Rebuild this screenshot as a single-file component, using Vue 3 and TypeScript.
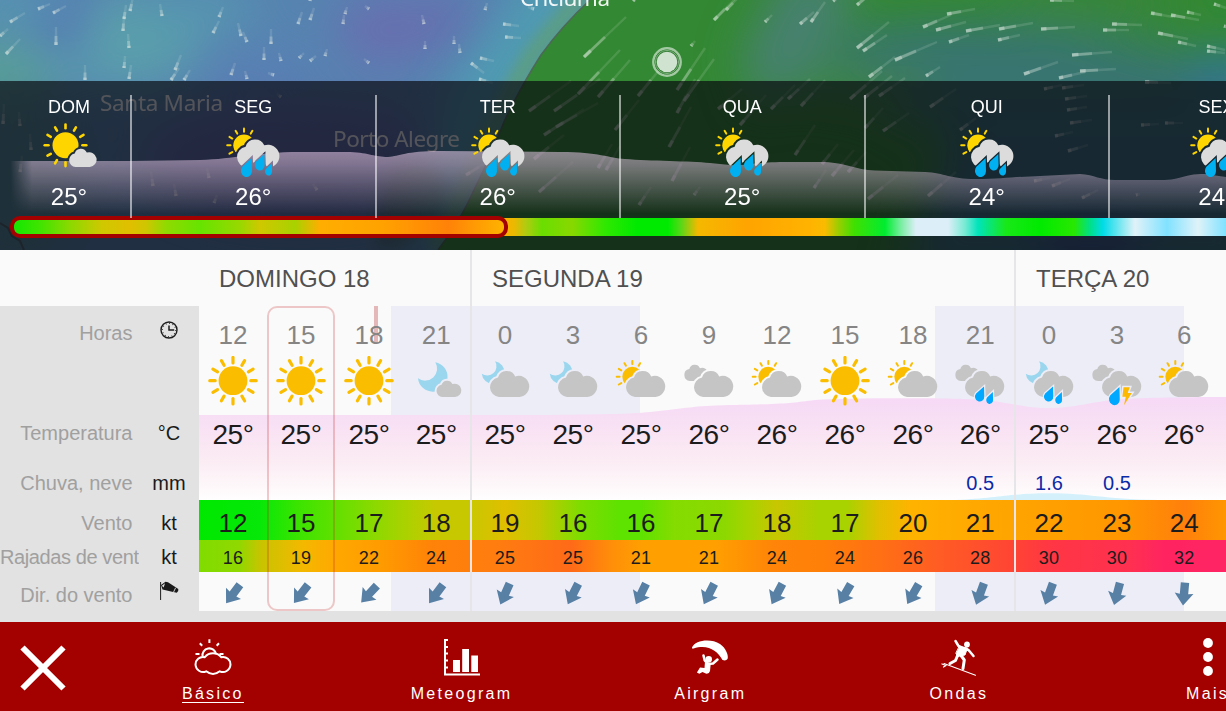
<script setup lang="ts">
type Icon = 'sun' | 'moonSmall' | 'moon' | 'sunCloud' | 'clouds' | 'cloudsRain' | 'moonRain' | 'storm'

interface Hour {
  hour: number
  icon: Icon
  temp: number
  rain?: string
  wind: number
  gust: number
  dir: number
}

interface Day {
  title: string
  hours: Hour[]
}

const overview = [
  { name: 'DOM', temp: '25°', rainy: false },
  { name: 'SEG', temp: '26°', rainy: true },
  { name: 'TER', temp: '26°', rainy: true },
  { name: 'QUA', temp: '25°', rainy: true },
  { name: 'QUI', temp: '24°', rainy: true },
  { name: 'SEX', temp: '24°', rainy: true },
]

const days: Day[] = [
  {
    title: 'DOMINGO 18',
    hours: [
      { hour: 12, icon: 'sun', temp: 25, wind: 12, gust: 16, dir: 37 },
      { hour: 15, icon: 'sun', temp: 25, wind: 15, gust: 19, dir: 38 },
      { hour: 18, icon: 'sun', temp: 25, wind: 17, gust: 22, dir: 43 },
      { hour: 21, icon: 'moonSmall', temp: 25, wind: 18, gust: 24, dir: 37 },
    ],
  },
  {
    title: 'SEGUNDA 19',
    hours: [
      { hour: 0, icon: 'moon', temp: 25, wind: 19, gust: 25, dir: 24 },
      { hour: 3, icon: 'moon', temp: 25, wind: 16, gust: 25, dir: 27 },
      { hour: 6, icon: 'sunCloud', temp: 25, wind: 16, gust: 21, dir: 26 },
      { hour: 9, icon: 'clouds', temp: 26, wind: 17, gust: 21, dir: 27 },
      { hour: 12, icon: 'sunCloud', temp: 26, wind: 18, gust: 24, dir: 28 },
      { hour: 15, icon: 'sun', temp: 26, wind: 17, gust: 24, dir: 30 },
      { hour: 18, icon: 'sunCloud', temp: 26, wind: 20, gust: 26, dir: 30 },
      { hour: 21, icon: 'cloudsRain', temp: 26, rain: '0.5', wind: 21, gust: 28, dir: 20 },
    ],
  },
  {
    title: 'TERÇA 20',
    hours: [
      { hour: 0, icon: 'moonRain', temp: 25, rain: '1.6', wind: 22, gust: 30, dir: 20 },
      { hour: 3, icon: 'storm', temp: 26, rain: '0.5', wind: 23, gust: 30, dir: 15 },
      { hour: 6, icon: 'sunCloud', temp: 26, wind: 24, gust: 32, dir: 5 },
    ],
  },
]

const hours = days.flatMap((d) => d.hours)

const allRays = [0, 30, 60, 90, 120, 150, 180, 210, 240, 270, 300, 330]
const backRays = [240, 270, 300, 330, 0, 30]

const cloud =
  'M19.3 41A9.8 9.8 0 0 1 18.2 21.6A9.2 9.2 0 0 1 35.4 20.4A10.6 10.6 0 1 1 39.6 41Z'
const drop = 'M9.5 0L9.8 9.7A4.9 4.9 0 1 1 1.2 6.8Z'
const moon = 'M24.3 6.3A14.8 14.8 0 1 1 7 22.3A12 12 0 0 0 24.3 6.3Z'

const hasSunBack = (i: Icon) => i === 'sunCloud'
const hasMoonBack = (i: Icon) => i === 'moon' || i === 'moonRain'
const hasCloudBack = (i: Icon) => i === 'clouds' || i === 'cloudsRain' || i === 'storm'

function cloudMask(i: Icon) {
  if (i === 'cloudsRain' || i === 'moonRain') return 'url(#cut-rain)'
  if (i === 'storm') return 'url(#cut-storm)'
  return undefined
}

// wind particles: head x, head y, tail dx, tail dy
const streaks = [
  [10, 22, 15, -9], [38, 9, 12, -5], [53, 13, 13, -7], [6, 54, 14, -15], [0, 36, 8, -7],
  [56, 45, 0, -18], [123, 31, 1, -15], [124, 19, 2, -14], [130, 11, 3, -14], [129, 48, -1, -14],
  [124, 68, 1, -12], [129, 79, 2, -14], [162, 16, -2, -12], [175, 70, 6, -15], [171, 80, 8, -12],
  [184, 80, 6, -10], [85, 80, 0, -15], [213, 33, 6, -12], [219, 17, 4, -10], [241, 36, -3, -13],
  [247, 42, -4, -10], [271, 44, 0, -15], [264, 60, 0, -13], [231, 75, 4, -12], [247, 79, -2, -8],
  [281, 61, -2, -8], [299, 58, 5, -5], [310, 61, 6, -5], [325, 56, 2, -7], [298, 24, 4, -12],
  [310, 20, 4, -12], [343, 24, 1, -9], [345, 14, 2, -7], [369, 9, -4, -3], [369, 63, -5, -4],
  [310, 1, 1, -5], [274, 75, -6, -2], [534, 9, -6, -2], [485, 10, 2, -7], [424, 24, -2, -9],
  [425, 49, 0, -8], [460, 53, -1, -9], [454, 44, 0, -8], [503, 24, 16, 2], [505, 37, 16, 1],
  [480, 58, 14, 3], [471, 63, 13, 10], [479, 79, 14, 4],
  [584, 57, 42, -40], [633, 1, 8, -8], [714, 20, 22, -22], [726, 10, 14, -14], [765, 22, 7, -7],
  [800, 24, 14, -12], [691, 46, 4, -5], [578, 94, 42, -44], [598, 97, 32, -37], [638, 96, 26, -32],
  [677, 90, 28, -42], [684, 101, 30, -42], [677, 113, 18, -34], [529, 111, 42, -30],
  [554, 111, 46, -32], [556, 127, 42, -24], [544, 135, 40, -26], [615, 130, 24, -30],
  [669, 147, 22, -40], [718, 109, 24, -20], [740, 125, 26, -30], [771, 109, 24, -24],
  [788, 99, 22, -20], [801, 106, 24, -26], [534, 159, 30, -24], [539, 192, 34, -30],
  [598, 168, 14, -24], [606, 170, 14, -24], [672, 181, 18, -34], [639, 205, 12, -18],
  [694, 195, 6, -8], [466, 175, 26, -16], [795, 155, 20, -30], [814, 188, 12, -18],
  [857, 5, 14, -12], [833, 1, 8, -6], [811, 22, 14, -20], [857, 48, 32, -26], [863, 51, 24, -16],
  [895, 60, 42, -18], [869, 77, 26, -20], [926, 76, 14, -9], [923, 27, 28, -12],
  [936, 30, 30, -8], [947, 14, 28, -5], [966, 31, 34, -6], [949, 42, 20, -7], [999, 29, 34, -6],
  [998, 40, 22, -5], [1041, 29, 34, -2], [1103, 30, 26, 0], [1112, 24, 30, 1], [1072, 55, 40, -3],
  [1080, 71, 36, -2], [1024, 74, 34, -12], [1059, 78, 26, -6], [1151, 13, 22, 4], [1171, 15, 28, 5],
  [1187, 12, 14, 3], [1158, 33, 30, 6], [1178, 42, 18, 4], [1207, 46, 18, 4], [1207, 51, 18, 2],
  [1214, 4, 12, 4], [1224, 26, 6, 2], [1050, 0, 24, 1], [850, 99, 32, -28], [864, 98, 28, -22],
  [879, 96, 26, -18], [930, 107, 26, -18], [883, 131, 26, -18], [865, 128, 18, -20],
  [1044, 89, 18, -4], [1062, 88, 22, -3], [1065, 99, 22, -3], [1067, 110, 20, -3],
  [1070, 123, 22, -3], [1055, 136, 18, -4], [1068, 151, 20, -6], [1145, 82, 26, 1],
  [1141, 125, 18, -1], [1165, 123, 18, 0], [960, 130, 16, -12], [822, 164, 16, -20],
  [832, 176, 22, -26], [848, 172, 18, -20], [868, 199, 30, -24], [928, 196, 28, -24],
  [1034, 181, 16, -3], [1052, 186, 18, -7], [1082, 198, 16, -8], [1136, 195, 4, -1],
  [20, 172, 2, -16], [31, 150, -1, -16], [3, 124, 1, -20], [20, 126, -1, -14], [153, 186, -2, -14],
  [176, 196, -2, -12], [209, 178, -2, -10], [214, 203, 3, -8], [281, 97, -4, -3], [317, 190, -4, -6],
]

const nav = [
  { id: 'basic', label: 'Básico' },
  { id: 'meteogram', label: 'Meteogram' },
  { id: 'airgram', label: 'Airgram' },
  { id: 'waves', label: 'Ondas' },
  { id: 'more', label: 'Mais' },
]
</script>

<template>
  <div class="app">
    <section class="top">
      <svg class="map" width="1226" height="250" viewBox="0 0 1226 250">
        <defs>
          <filter id="soft" x="-50%" y="-50%" width="200%" height="200%">
            <feGaussianBlur stdDeviation="22" />
          </filter>
          <filter id="edge" x="-10%" y="-10%" width="120%" height="120%">
            <feGaussianBlur stdDeviation="7" />
          </filter>
          <filter id="trail" x="-5%" y="-5%" width="110%" height="110%">
            <feGaussianBlur stdDeviation=".6" />
          </filter>
          <clipPath id="sea">
            <path d="M590 0Q562 26 541 55Q520 88 504 122Q489 160 474 190Q460 222 438 250H1226V0Z" />
          </clipPath>
        </defs>
        <rect width="1226" height="250" fill="#5683b0" />
        <g filter="url(#soft)">
          <ellipse cx="5" cy="70" rx="70" ry="30" fill="#58a098" />
          <ellipse cx="100" cy="72" rx="70" ry="18" fill="#5898ae" />
          <ellipse cx="55" cy="28" rx="34" ry="20" fill="#5474b5" />
          <ellipse cx="145" cy="35" rx="60" ry="45" fill="#5a9fab" />
          <ellipse cx="10" cy="5" rx="50" ry="16" fill="#569cb0" />
          <ellipse cx="200" cy="10" rx="60" ry="24" fill="#5795b0" />
          <ellipse cx="250" cy="70" rx="60" ry="26" fill="#5880b4" />
          <ellipse cx="390" cy="30" rx="55" ry="36" fill="#6870b0" />
          <ellipse cx="440" cy="20" rx="40" ry="30" fill="#6571b0" />
          <ellipse cx="300" cy="160" rx="160" ry="60" fill="#5d6cac" />
          <ellipse cx="20" cy="180" rx="60" ry="90" fill="#4f8594" />
        </g>
        <path
          d="M580 -30L556 -10Q535 26 512 55Q487 88 472 122L440 250" fill="none" stroke="#4f9cb2"
          stroke-width="62" filter="url(#soft)"
        />
        <path
          d="M588 -10Q555 26 532 55Q512 88 496 122L436 250" fill="none" stroke="#5c9f80"
          stroke-width="16" filter="url(#edge)"
        />
        <g clip-path="url(#sea)">
          <rect x="420" width="806" height="250" fill="#338833" />
          <g filter="url(#soft)">
            <path d="M790 -40L860 -20L820 70L760 110L740 60Z" fill="#46816f" />
            <path d="M830 40Q950 -10 1260 70V130H900Z" fill="#37756f" />
            <ellipse cx="870" cy="85" rx="70" ry="18" fill="#3d8050" />
            <ellipse cx="1090" cy="0" rx="90" ry="26" fill="#38853b" />
            <path d="M960 110H1260V280H900Z" fill="#376e80" />
            <ellipse cx="1090" cy="250" rx="60" ry="25" fill="#384e90" />
            <ellipse cx="1226" cy="72" rx="40" ry="24" fill="#337590" />
          </g>
        </g>
        <path
          d="M590 0Q562 26 541 55Q520 88 504 122Q489 160 474 190Q460 222 438 250" fill="none"
          stroke="#4c6a55" stroke-width="1.6"
        />
        <path d="M0 223L8 228L12 236L20 241L24 250" fill="none" stroke="#444" stroke-width="2" opacity=".6" />
        <path
          d="M385 178L400 162L420 160L432 165L448 188L442 215L420 236L400 250H374L378 210Z"
          fill="#446655" opacity=".45" filter="url(#edge)"
        />
        <g stroke="#e8efe8" filter="url(#trail)">
          <g v-for="(s, i) in streaks" :key="i">
            <path
              :d="`M${s[0]} ${s[1]}l${s[2]} ${s[3]}`" stroke-width="2.4" opacity=".14"
            />
            <path
              :d="`M${s[0]} ${s[1]}l${s[2] * 0.5} ${s[3] * 0.5}`" stroke-width="3" opacity=".28"
            />
            <path
              :d="`M${s[0]} ${s[1]}l${s[2] * 0.16} ${s[3] * 0.16}`" stroke-width="3.6" opacity=".4"
            />
          </g>
        </g>
        <g class="places">
          <text x="520" y="6" textLength="90">Criciúma</text>
          <text x="100" y="110.500" textLength="123">Santa Maria</text>
          <text x="333" y="147" textLength="127">Porto Alegre</text>
        </g>
        <circle cx="667" cy="62" r="13.700" fill="none" stroke="#fff" stroke-width="2.400" opacity=".55" />
        <circle cx="667" cy="62" r="12.300" fill="#2f7a2f" />
        <circle cx="667" cy="62" r="11.600" fill="none" stroke="#8fbf8f" stroke-width=".8" />
        <circle cx="667" cy="62" r="10.300" fill="#d0e3d0" />
      </svg>

      <div class="overview">
        <svg class="overview-temp" width="1226" height="169" viewBox="0 81 1226 169">
          <defs>
            <linearGradient id="ovFade" x1="0" y1="150" x2="0" y2="214" gradientUnits="userSpaceOnUse">
              <stop offset="0" stop-color="#f3d3f3" stop-opacity=".54" />
              <stop offset=".2" stop-color="#f3d3f3" stop-opacity=".46" />
              <stop offset="1" stop-color="#f3d3f3" stop-opacity="0" />
            </linearGradient>
            <linearGradient id="ovLeft" x1="10" y1="0" x2="32" y2="0" gradientUnits="userSpaceOnUse">
              <stop offset="0" stop-color="#000" />
              <stop offset="1" stop-color="#fff" />
            </linearGradient>
            <mask id="ovMask" maskUnits="userSpaceOnUse" x="0" y="81" width="1226" height="169">
              <rect x="0" y="81" width="1226" height="169" fill="url(#ovLeft)" />
            </mask>
          </defs>
          <path
            mask="url(#ovMask)" fill="url(#ovFade)"
            d="M0 161H130L200 160C235 159 255 152 300 152H350C370 153 375 157 388 157C400 156 405 151 440 151L560 152C600 152 608 158 625 159C650 161 690 161 710 163L735 165.500C755 164 760 162 790 162H820C845 162 855 170 875 170.500L925 172C945 173 950 179 975 179C1000 179 1010 177 1030 176.500L1080 174C1095 175 1100 180 1115 180H1160C1185 180 1180 174 1205 174L1226 177V215H0Z"
          />
        </svg>
        <div class="wind-strip"></div>
        <div class="viewport"></div>
        <div class="overview-days">
          <div v-for="(d, i) in overview" :key="i" class="ov-day">
            <div class="ov-name">{{ d.name }}</div>
            <svg v-if="!d.rainy" class="ov-icon" width="56" height="56" viewBox="0 0 56 56">
              <g mask="url(#cut-ov-small)">
                <circle cx="24.500" cy="22.300" r="13" fill="#ffd500" />
                <path
                  v-for="a in allRays" :key="a" d="M0 -17V-20.800" class="ray ov-ray thick"
                  :transform="`translate(24.5 22.3) rotate(${a})`"
                />
              </g>
              <path :d="cloud" fill="#dcdcdc" transform="translate(21 15.3) scale(.7)" />
            </svg>
            <svg v-else class="ov-icon" width="56" height="56" viewBox="0 0 56 56">
              <g mask="url(#cut-ov-cloud)">
                <circle cx="19" cy="22.300" r="10.700" fill="#ffd500" />
                <path
                  v-for="a in backRays" :key="a" d="M0 -13.500V-16.800" class="ray ov-ray"
                  :transform="`translate(19 22.3) rotate(${a})`"
                />
              </g>
              <g mask="url(#cut-ov-rain)">
                <path :d="cloud" fill="#dcdcdc" transform="translate(1 0.3) scale(1.08)" />
              </g>
              <g fill="#00b0f0">
                <path :d="drop" transform="translate(16 35) scale(1.12 1.28)" />
                <path :d="drop" transform="translate(30 31) scale(.98 1.11)" />
                <path :d="drop" transform="translate(40 40.3) scale(.72 .82)" />
              </g>
            </svg>
            <div class="ov-temp">{{ d.temp }}</div>
          </div>
        </div>
      </div>
    </section>

    <section class="forecast">
      <div class="labels">
        <div class="label hours"><span>Horas</span>
          <i><svg width="18" height="18" viewBox="0 0 18 18" fill="none" stroke="#1d1d1d">
            <circle cx="9" cy="9" r="8" stroke-width="1.400" />
            <circle cx="9" cy="9" r="6.700" stroke-width="1.300" stroke-dasharray=".8 2.708" />
            <path d="M9 4.500V9H14.200" stroke-width="1.500" />
          </svg></i>
        </div>
        <div class="label icons"></div>
        <div class="label temp"><span>Temperatura</span><i>°C</i></div>
        <div class="label rain"><span>Chuva, neve</span><i>mm</i></div>
        <div class="label wind"><span>Vento</span><i>kt</i></div>
        <div class="label gust"><span>Rajadas de vento</span><i>kt</i></div>
        <div class="label dir"><span>Dir. do vento</span>
          <i><svg width="20" height="20" viewBox="0 0 20 20">
            <path d="M1.600 1V19" stroke="#1d1d1d" stroke-width="1" />
            <path d="M2 4L6.500 .8L9 1.200L19.300 8Q19.800 10.200 17.800 11.800L12 10.500L3.500 8.500Z" fill="#1a1a1a" />
            <path d="M2.900 4.800L6 2.300L4.700 6.500Z" fill="#e2e2e2" />
            <path d="M16.600 6.800L14.600 11" stroke="#e2e2e2" stroke-width=".9" />
          </svg></i>
        </div>
      </div>

      <div class="table">
        <div class="titles">
          <div
            v-for="d in days" :key="d.title" class="title"
            :style="{ width: d.hours.length * 68 + 'px' }"
          >{{ d.title }}</div>
        </div>
        <div class="grid">
          <div class="night first"></div>
          <div class="night second"></div>
          <div class="now"></div>
          <svg class="chart" width="1027" height="194" viewBox="199 306 1027 194">
            <defs>
              <linearGradient id="pink" x1="0" y1="397" x2="0" y2="500" gradientUnits="userSpaceOnUse">
                <stop offset="0" stop-color="#f6d9f6" />
                <stop offset=".25" stop-color="#f8e0f4" />
                <stop offset=".6" stop-color="#fbebf3" />
                <stop offset="1" stop-color="#fffefe" />
              </linearGradient>
            </defs>
            <path
              fill="url(#pink)"
              d="M199 415H540C600 414.500 630 414 650 412C690 408 690 406 730 405C790 404 790 403 815 400C840 398.500 880 398 920 398.300C960 398.500 985 399 1005 403C1025 406 1030 408 1049 408C1075 408 1090 402 1117 399.500C1135 398 1180 397 1226 397V500H199Z"
            />
            <path
              fill="#d4f1fb"
              d="M955 500C1000 498 1010 493.300 1050 493.300C1090 493.300 1100 499 1160 500Z"
            />
          </svg>

          <div class="row hours">
            <div v-for="(h, i) in hours" :key="i" class="cell">{{ h.hour }}</div>
          </div>
          <div class="row icons">
            <div v-for="(h, i) in hours" :key="i" class="cell">
              <svg width="52" height="52" viewBox="0 0 52 52">
                <template v-if="h.icon === 'sun'">
                  <circle cx="26" cy="24.700" r="14.400" fill="#fbbd00" />
                  <path
                    v-for="a in allRays" :key="a" d="M0 -17.800V-23.200" class="ray thick"
                    :transform="`translate(26 24.7) rotate(${a})`"
                  />
                </template>
                <template v-else-if="h.icon === 'moonSmall'">
                  <g mask="url(#cut-small)"><path :d="moon" fill="#9ad6ee" transform="translate(1 0)" /></g>
                  <path :d="cloud" fill="#c5c5c5" transform="translate(20.1 15.2) scale(.63)" />
                </template>
                <g v-else transform="translate(.8 0)">
                  <g mask="url(#cut-cloud)">
                    <template v-if="hasSunBack(h.icon)">
                      <circle cx="16.500" cy="20.700" r="10" fill="#fbbd00" />
                      <path
                        v-for="a in backRays" :key="a" d="M0 -12.700V-15.600" class="ray"
                        :transform="`translate(16.5 20.7) rotate(${a})`"
                      />
                    </template>
                    <path
                      v-if="hasMoonBack(h.icon)" :d="moon" fill="#9ad6ee"
                      transform="translate(-3.4 .5) scale(.77)"
                    />
                    <path
                      v-if="hasCloudBack(h.icon)" :d="cloud" fill="#c5c5c5"
                      transform="translate(-5.8 -.5) scale(.62)"
                    />
                  </g>
                  <g :mask="cloudMask(h.icon)"><path :d="cloud" fill="#c5c5c5" /></g>
                  <g v-if="h.icon === 'cloudsRain' || h.icon === 'moonRain'" fill="#00a8ff">
                    <path :d="drop" transform="translate(20.2 30.6) scale(.95 1)" />
                    <path :d="drop" transform="translate(31.4 36) scale(.7 .8)" />
                  </g>
                  <template v-if="h.icon === 'storm'">
                    <path :d="drop" fill="#00a8ff" transform="translate(17.2 31) scale(1.1 1.22)" />
                    <path d="M31.700 31.300H38L35.900 37H40L32.200 49.300L34 40.800H30.600Z" fill="#fcb900" />
                  </template>
                </g>
              </svg>
            </div>
          </div>
          <div class="row temp">
            <div v-for="(h, i) in hours" :key="i" class="cell">{{ h.temp }}°</div>
          </div>
          <div class="row rain">
            <div v-for="(h, i) in hours" :key="i" class="cell">{{ h.rain }}</div>
          </div>
          <div class="row wind">
            <div v-for="(h, i) in hours" :key="i" class="cell">{{ h.wind }}</div>
          </div>
          <div class="row gust">
            <div v-for="(h, i) in hours" :key="i" class="cell">{{ h.gust }}</div>
          </div>
          <div class="row dir">
            <div v-for="(h, i) in hours" :key="i" class="cell">
              <svg width="26" height="26" viewBox="-13 -13 26 26">
                <path
                  d="M-4.200 -11.500H4.200V0L9.400 -.8L0 11.500L-9.400 -.8L-4.200 0Z" fill="#5880a5"
                  :transform="`rotate(${h.dir})`"
                />
              </svg>
            </div>
          </div>
          <div class="selected"></div>
        </div>
        <div class="separator monday"></div>
        <div class="separator tuesday"></div>
      </div>
    </section>

    <nav class="nav">
      <button class="close">
        <svg width="46" height="46" viewBox="0 0 46 46">
          <path d="M2.500 2.500L43.500 43.500M43.500 2.500L2.500 43.500" stroke="#fff" stroke-width="6" />
        </svg>
      </button>
      <button v-for="(n, i) in nav" :key="n.id" class="nav-item" :class="{ active: i === 0 }">
        <svg
          v-if="n.id === 'basic'" width="38" height="38" viewBox="0 0 38 38" fill="none"
          stroke="#fff" stroke-width="2"
        >
          <path
            d="M12.200 33.300A7.500 7.500 0 1 1 10.800 19.200A10.700 10.700 0 0 1 27.200 19.200A7.500 7.500 0 1 1 25.800 33.300Q19 38.800 12.200 33.300Z"
          />
          <path d="M8.600 18.500A6.800 6.800 0 1 1 22 16.200" />
          <path d="M15.400 1.300V5M5.800 5.300L8.200 7.800M25 5.300L22.700 7.800M1.500 16H5.500M25.500 16H29.500" />
        </svg>
        <svg v-else-if="n.id === 'meteogram'" width="38" height="38" viewBox="0 0 38 38">
          <path
            d="M5 2H2V36.500H37M2 9H5M2 15.500H5M2 22.500H5M2 29.500H5" fill="none" stroke="#fff"
            stroke-width="2"
          />
          <path d="M10 22H17V34H10ZM19.200 11H26V34H19.200ZM28.300 17.500H35V34H28.300Z" fill="#fff" />
        </svg>
        <svg
          v-else-if="n.id === 'airgram'" width="38" height="38" viewBox="0 0 38 38" fill="#fff"
        >
          <path d="M1 9.500C4 2 20 0 29 6C35 10 38 18 36.500 21Q35 23.200 31.500 22C26 12.500 17 6 2.500 10.500Q.8 11 1 9.500Z" />
          <circle cx="17.700" cy="21.300" r="3.300" />
          <path
            d="M12.500 17.500L13.700 22.500L17 26L22 25.500L26.500 21.500" fill="none" stroke="#fff"
            stroke-width="2.500" stroke-linecap="round" stroke-linejoin="round"
          />
          <path d="M14 23.500L19.800 25L19 33Q18.200 36.200 14.800 35.600L11.500 34L8.300 35.800L5.900 34.400L9 29.500L13.500 30Z" />
        </svg>
        <svg
          v-else-if="n.id === 'waves'" width="38" height="38" viewBox="0 0 38 38" fill="none"
          stroke="#fff" stroke-linecap="round" stroke-linejoin="round"
        >
          <circle cx="27" cy="6.500" r="2.900" fill="#fff" stroke="none" />
          <path d="M15.500 3L18.500 8L24 10.500L28.500 12L33.500 18" stroke-width="2.500" />
          <path d="M19.500 8.500L27.500 10L25 17L17.500 18.500L16 15.500Z" fill="#fff" stroke-width="1" />
          <path d="M18 16.500L15.500 22.500L10 25.500M21 17.500L24.300 22L23 30.500" stroke-width="3" />
          <path d="M4 25.500L35.500 37.300" stroke-width="1.100" />
          <path d="M2 26L6 27.500L3.500 29" stroke-width="1.300" />
        </svg>
        <svg v-else width="38" height="38" viewBox="0 0 38 38" fill="#fff">
          <circle cx="19" cy="5" r="4.900" />
          <circle cx="19" cy="19" r="4.900" />
          <circle cx="19" cy="33" r="4.900" />
        </svg>
        <span>{{ n.label }}</span>
      </button>
    </nav>

    <!-- shared masks that cut a thin gap around overlapping icon parts -->
    <svg class="masks" width="0" height="0">
      <defs>
        <mask id="cut-cloud" maskUnits="userSpaceOnUse" x="-5" y="-5" width="70" height="70">
          <rect x="-5" y="-5" width="70" height="70" fill="#fff" />
          <path :d="cloud" fill="#000" stroke="#000" stroke-width="4" />
        </mask>
        <mask id="cut-small" maskUnits="userSpaceOnUse" x="-5" y="-5" width="70" height="70">
          <rect x="-5" y="-5" width="70" height="70" fill="#fff" />
          <path :d="cloud" stroke="#000" stroke-width="6" transform="translate(20.1 15.2) scale(.63)" />
        </mask>
        <mask id="cut-rain" maskUnits="userSpaceOnUse" x="-5" y="-5" width="70" height="70">
          <rect x="-5" y="-5" width="70" height="70" fill="#fff" />
          <path :d="drop" stroke="#000" stroke-width="2.600" transform="translate(20.2 30.6) scale(.95 1)" />
          <path :d="drop" stroke="#000" stroke-width="3.600" transform="translate(31.4 36) scale(.7 .8)" />
        </mask>
        <mask id="cut-storm" maskUnits="userSpaceOnUse" x="-5" y="-5" width="70" height="70">
          <rect x="-5" y="-5" width="70" height="70" fill="#fff" />
          <path :d="drop" stroke="#000" stroke-width="2.300" transform="translate(17.2 31) scale(1.1 1.22)" />
          <path d="M31.700 31.300H38L35.900 37H40L32.200 49.300L34 40.800H30.600Z" stroke="#000" stroke-width="3" />
        </mask>
        <mask id="cut-ov-small" maskUnits="userSpaceOnUse" x="-5" y="-5" width="70" height="70">
          <rect x="-5" y="-5" width="70" height="70" fill="#fff" />
          <path :d="cloud" stroke="#000" stroke-width="5.500" transform="translate(21 15.3) scale(.7)" />
        </mask>
        <mask id="cut-ov-cloud" maskUnits="userSpaceOnUse" x="-5" y="-5" width="70" height="70">
          <rect x="-5" y="-5" width="70" height="70" fill="#fff" />
          <path :d="cloud" stroke="#000" stroke-width="3.800" transform="translate(1 0.3) scale(1.08)" />
        </mask>
        <mask id="cut-ov-rain" maskUnits="userSpaceOnUse" x="-5" y="-5" width="70" height="70">
          <rect x="-5" y="-5" width="70" height="70" fill="#fff" />
          <g stroke="#000">
            <path :d="drop" stroke-width="2.200" transform="translate(16 35) scale(1.12 1.28)" />
            <path :d="drop" stroke-width="2.400" transform="translate(30 31) scale(.98 1.11)" />
            <path :d="drop" stroke-width="3.200" transform="translate(40 40.3) scale(.72 .82)" />
            <path stroke="none" d="M26 41L31 38L38 38L45 48L26 48Z" />
          </g>
        </mask>
      </defs>
    </svg>
  </div>
</template>

<style>
body { margin: 0; overflow: hidden; }
</style>

<style scoped>
.app {
  display: flex;
  flex-direction: column;
  width: 1226px;
  height: 711px;
  overflow: hidden;
  position: relative;
  background: #fafafa;
  font-family: "Liberation Sans", Arial, sans-serif;
}
.masks { position: absolute; }
.ray {
  fill: none;
  stroke: #fbbd00;
  stroke-width: 2;
  stroke-linecap: round;
}
.ray.ov-ray { stroke: #ffd500; }
.ray.thick { stroke-width: 3.2; }
.ray.ov-ray.thick { stroke-width: 2.6; }

.top {
  position: relative;
  display: flex;
  flex-direction: column;
  justify-content: flex-end;
  flex: none;
  height: 250px;
  overflow: hidden;
}
.map { position: absolute; top: 0; left: 0; }
.places {
  fill: #fff;
  fill-opacity: 0.92;
  font-family: "Noto Sans", "Open Sans", sans-serif;
  font-size: 22.5px;
}
.overview {
  position: relative;
  display: flex;
  flex-direction: column;
  height: 169px;
  background: rgba(8, 8, 14, 0.68);
}
.overview-temp { position: absolute; top: 0; left: 0; }
.overview-days {
  position: relative;
  order: -1;
  z-index: 1;
  display: flex;
  height: 123px;
  padding: 14px 0 0 8px;
}
.ov-day {
  box-sizing: border-box;
  flex: none;
  display: flex;
  flex-direction: column;
  align-items: center;
  width: 244.5px;
  height: 123px;
  border-right: 2px solid rgba(255, 255, 255, 0.55);
  color: #fff;
}
.ov-day:first-child { width: 124px; }
.ov-day:last-child { width: 213px; border: none; }
.ov-name { font-size: 18px; line-height: 24px; }
.ov-icon { margin-top: 4px; }
.ov-temp {
  font-size: 24px;
  line-height: 28px;
  margin-top: 4px;
}
.wind-strip {
  position: relative;
  height: 18px;
  margin-left: 12px;
  border-radius: 9px 0 0 9px;
  background: linear-gradient(to right,
    #10e800 0, #40e400 28px, #90d800 60px, #cfc800 90px, #e0bf00 118px, #cfc600 134px,
    #90da00 154px, #66e400 188px, #98d800 228px, #cfc800 248px, #a8d200 283px,
    #ffae00 308px, #ffa200 370px, #ff8208 436px, #ffb000 488px, #ecb800 502px,
    #b0cc10 514px, #6ade00 530px, #88d800 560px, #30e800 593px, #00ea00 625px,
    #00ea00 656px, #58d818 669px, #f5b800 686px, #ffa400 735px, #ffb300 798px,
    #fabb00 813px, #90d000 828px, #40e000 842px, #00ec30 873px, #80eea8 890px,
    #dceef8 904px, #dceef8 936px, #78ead4 953px, #00e4bb 966px, #18e818 994px,
    #00ea00 1028px, #28e800 1062px, #00e088 1078px, #00dbe8 1091px, #e0f2f8 1123px,
    #80e2ff 1155px, #dff2f8 1186px, #80e2ff 1214px);
}
.viewport {
  position: absolute;
  box-sizing: border-box;
  left: 9.5px;
  top: 135px;
  width: 498.5px;
  height: 22px;
  border: 4px solid #a30000;
  border-radius: 10px;
}

.forecast {
  display: flex;
  flex: none;
  box-sizing: border-box;
  height: 372px;
  border-bottom: 11px solid #e2e2e2;
}
.labels {
  box-sizing: border-box;
  width: 199px;
  margin-top: 56px;
  background: #e2e2e2;
}
.label {
  display: flex;
  align-items: center;
  font-size: 20px;
  color: #a0a0a0;
}
.label span {
  box-sizing: border-box;
  width: 139px;
  padding-right: 6.5px;
  overflow: hidden;
  white-space: nowrap;
  text-align: right;
}
.label i {
  display: flex;
  justify-content: center;
  width: 60px;
  font-style: normal;
  color: #1a1a1a;
}
.label.hours span { padding-top: 4px; }
.label.hours i { padding-bottom: 2px; }
.label.dir span { padding-top: 7px; }
.label.dir i { padding-bottom: 1px; }
.label.gust { padding-top: 3px; box-sizing: border-box; }
.label.gust span { letter-spacing: -0.4px; }
.hours { height: 50px; }
.icons { height: 54px; }
.temp { height: 47px; }
.rain { height: 43px; }
.wind { height: 40px; }
.gust { height: 32px; }
.dir { height: 39px; }
.label.temp { box-sizing: border-box; padding-bottom: 1px; }
.label.rain { padding-top: 9px; box-sizing: border-box; }
.label.wind { padding-top: 6px; box-sizing: border-box; }

.table {
  position: relative;
  width: 1027px;
  overflow: hidden;
  background: #fafafa;
}
.titles { display: flex; height: 56px; }
.title {
  box-sizing: border-box;
  flex: none;
  padding-left: 21px;
  font-size: 24px;
  line-height: 58px;
  color: #505050;
}
.title:first-child { padding-left: 20px; }
.grid { position: relative; height: 305px; }
.night, .now, .chart, .selected, .separator { position: absolute; }
.night { top: 0; width: 249px; height: 305px; background: #ecedf7; }
.night.first { left: 192px; }
.night.second { left: 736px; }
.now { left: 175px; top: 0; width: 4px; height: 37px; background: #e4b8b8; }
.chart { left: 0; top: 0; }
.selected {
  box-sizing: border-box;
  left: 68px;
  top: 0;
  width: 68px;
  height: 305px;
  border: 2px solid rgba(190, 20, 20, 0.22);
  border-radius: 10px;
}
.separator { top: 0; width: 2px; height: 361px; background: #e6e6e8; }
.monday { left: 271px; }
.tuesday { left: 815px; }

.row { position: relative; display: flex; }
.cell {
  box-sizing: border-box;
  flex: none;
  display: flex;
  align-items: center;
  justify-content: center;
  width: 68px;
  height: 100%;
}
.cell:nth-child(4), .cell:nth-child(12), .cell:last-child { padding-right: 1.5px; }
.row.hours { font-size: 26px; color: #858585; }
.row.hours .cell { padding-top: 9px; }
.row.icons .cell { height: 52px; }
.row.temp { font-size: 28px; letter-spacing: -0.4px; color: #1c1c1c; }
.row.temp .cell { padding-top: 3px; }
.row.rain { font-size: 20px; color: #0a2aa8; }
.row.rain .cell { padding-top: 9px; }
.row.wind {
  font-size: 26px;
  color: #1c1c1c;
  background: linear-gradient(to right,
    #00e800 0, #06e808 60px, #3ce400 100px, #70de00 150px, #90d800 180px, #b0d000 212px,
    #c8c800 238px, #c8c800 270px, #dfbf00 306px, #c4c800 340px, #80dc00 380px,
    #5ee200 420px, #5ee200 442px, #84dc00 475px, #8cd800 525px, #a8d300 550px,
    #c8c600 578px, #a8d300 620px, #a8d200 648px, #e0c000 680px, #ffb300 712px,
    #ffa800 780px, #ffa000 850px, #ff9600 925px, #ff800c 986px, #ff9600 1027px);
}
.row.wind .cell { padding-top: 7px; }
.row.gust {
  font-size: 18px;
  letter-spacing: 0.3px;
  color: #1c1c1c;
  background: linear-gradient(to right,
    #80dc00 0, #90d800 40px, #c8c400 62px, #f4b800 104px, #ffa800 136px, #ff9c00 180px,
    #ff8208 234px, #ff7c10 300px, #ff6a18 372px, #ff9008 415px, #ffa000 445px,
    #ffa000 515px, #ff8408 575px, #ff8008 620px, #ff7014 680px, #ff5c24 740px,
    #ff4434 815px, #ff3644 850px, #ff3050 930px, #ff2460 965px, #ff2464 1027px);
}
.row.gust .cell { padding-top: 4px; }
.row.dir .cell { padding-top: 5px; }

.nav {
  display: flex;
  flex: none;
  height: 89px;
  background: #a30000;
}
.nav button {
  flex: none;
  display: flex;
  padding: 0;
  border: none;
  background: none;
  font-family: inherit;
  cursor: pointer;
}
.nav .close {
  width: 88.5px;
  padding: 23px 0 0 20px;
  box-sizing: border-box;
}
.nav .nav-item {
  flex-direction: column;
  align-items: center;
  width: 248.7px;
  padding-top: 16px;
  color: #fff;
}
.nav-item span {
  margin-top: 9px;
  font-size: 16px;
  line-height: 17px;
  letter-spacing: 2.3px;
  border-bottom: 1px solid transparent;
}
.nav-item.active span { border-bottom-color: #fff; }
</style>
